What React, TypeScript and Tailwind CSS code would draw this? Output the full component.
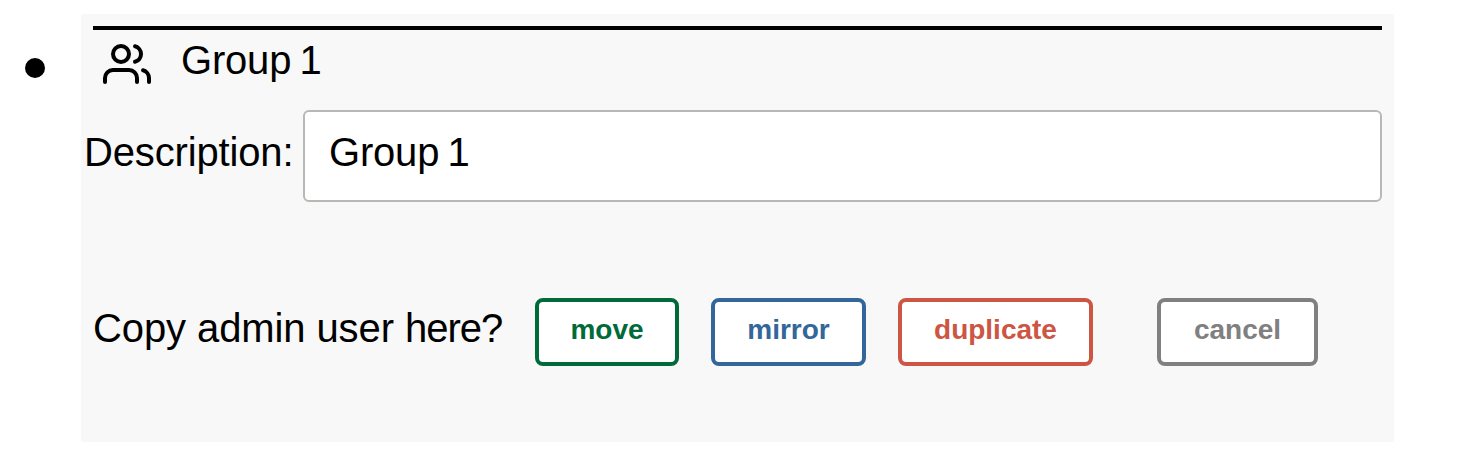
import React from "react";

type ActionProps = { label: string; className: string };

function Action({ label, className }: ActionProps) {
  return (
    <button
      className={`h-[68px] shrink-0 rounded-[8px] border-4 bg-white pb-[5px] text-[28px] font-bold ${className}`}
    >
      {label}
    </button>
  );
}

export default function App() {
  return (
    <div className="flex h-[467px] w-[1474px] bg-white pt-[14px] font-['Liberation_Sans',Arial,sans-serif] text-[40px] leading-[46px] text-black">
      <div className="flex w-[81px] shrink-0 pl-[25px] pt-[44px]">
        <span className="size-5 rounded-full bg-black" />
      </div>
      <section className="flex h-[428px] w-[1313px] flex-col bg-[#f8f8f8] pt-3">
        <header className="mx-3 flex h-[84px] border-t-4 border-black pl-[10px]">
          <svg
            className="mt-[10px] size-12"
            viewBox="0 0 24 24"
            fill="none"
            stroke="currentColor"
            strokeWidth="2"
            strokeLinecap="round"
            strokeLinejoin="round"
          >
            <path d="M17 21v-2a4 4 0 0 0-4-4H5a4 4 0 0 0-4 4v2" />
            <circle cx="9" cy="7" r="4" />
            <path d="M23 21v-2a4 4 0 0 0-3-3.87" />
            <path d="M16 3.13a4 4 0 0 1 0 7.75" />
          </svg>
          <span className="ml-[30px] mt-[7px] tracking-[-0.2px] [word-spacing:-2.5px]">Group 1</span>
        </header>
        <div className="flex h-[92px] pr-3">
          <label className="w-[222px] shrink-0 pl-[3px] pt-[19px] tracking-[-0.15px]">Description:</label>
          <div className="flex-1 rounded-[6px] border-2 border-[#b8b8b4] bg-white pl-6 pt-[17px] tracking-[-0.2px] [word-spacing:-2.5px]">
            Group 1
          </div>
        </div>
        <div className="mt-[96px] flex h-[68px] pl-3">
          <span className="w-[442px] shrink-0 pt-[7px] tracking-[-0.1px]">
            Copy admin user <span className="tracking-[-1px]">here?</span>
          </span>
          <Action label="move" className="w-[144px] border-[#006b38] text-[#006b38]" />
          <Action label="mirror" className="ml-8 w-[155px] border-[#336699] text-[#336699]" />
          <Action label="duplicate" className="ml-8 w-[195px] border-[#cc5544] text-[#cc5544]" />
          <Action label="cancel" className="ml-16 w-[161px] border-[#808080] text-[#808080]" />
        </div>
      </section>
    </div>
  );
}
